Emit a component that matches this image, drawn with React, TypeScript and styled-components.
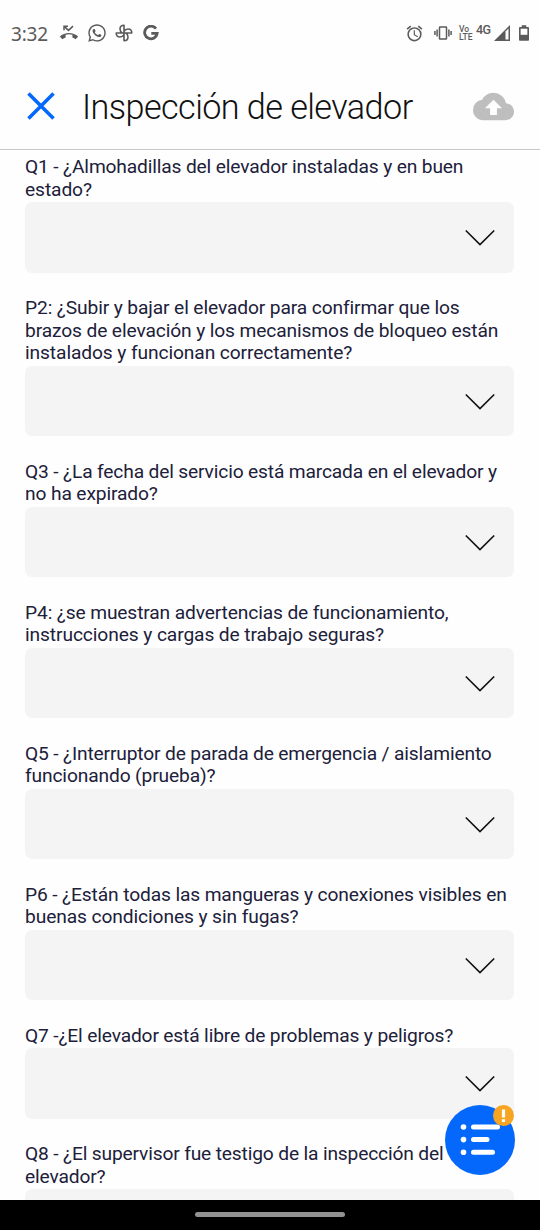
import React from "react";
import styled, { createGlobalStyle } from "styled-components";
import { FaWhatsapp } from "react-icons/fa";
import { MdAlarm, MdCloudUpload } from "react-icons/md";

const GlobalStyle = createGlobalStyle`
  * { box-sizing: border-box; }
  html, body { margin: 0; padding: 0; background: #fff; }
  body { font-family: Roboto, "Liberation Sans", sans-serif; }
`;

const Screen = styled.div`
  position: relative;
  display: flex;
  flex-direction: column;
  width: 540px;
  height: 1230px;
  overflow: hidden;
  background: #fefefe;
`;

const StatusBar = styled.div`
  display: flex;
  align-items: center;
  justify-content: space-between;
  height: 66px;
  padding: 0 11px 0 11px;
  color: #5b5b5b;
`;

const StatusGroup = styled.div<{ $gap: number }>`
  display: flex;
  align-items: center;
  gap: ${(p) => p.$gap}px;
  svg { display: block; flex: none; }
`;

const Time = styled.span`
  width: 40px;
  padding-top: 2px;
  font: 400 19px/24px "Noto Sans", sans-serif;
  letter-spacing: -0.2px;
  white-space: nowrap;
`;

const Volte = styled.span`
  display: flex;
  flex-direction: column;
  width: 14px;
  font-size: 8.5px;
  font-weight: 500;
  line-height: 8px;
`;

const Network = styled.span`
  width: 15px;
  height: 23px;
  margin: 0 3px;
  font-size: 12.5px;
  font-weight: 500;
  line-height: 15px;
  letter-spacing: -0.5px;
`;

const Header = styled.header`
  display: flex;
  align-items: center;
  flex: none;
  height: 84px;
  padding: 0 26px 3px;
  border-bottom: 1.5px solid #c9c9c9;
  svg { display: block; flex: none; }
`;

const Title = styled.h1`
  flex: 1;
  margin: 2px 0 0 26px;
  font-size: 34.2px;
  font-weight: 300;
  line-height: 42px;
  letter-spacing: -0.57px;
  color: #111;
  white-space: nowrap;
`;

const Form = styled.main`
  display: flex;
  flex-direction: column;
  gap: 24.5px;
  flex: 1;
  min-height: 0;
  padding: 6px 26px 0 25px;
  overflow: hidden;
`;

const Field = styled.section`
  flex: none;
`;

const Question = styled.div`
  padding-bottom: 1px;
  font-size: 19.2px;
  line-height: 22.5px;
  color: #20203a;
`;

const Line = styled.span<{ $spacing: number }>`
  display: block;
  letter-spacing: ${(p) => p.$spacing}px;
  white-space: nowrap;
`;

const Select = styled.button`
  display: flex;
  align-items: center;
  justify-content: flex-end;
  width: 100%;
  height: 70.5px;
  padding: 2px 19px 0 0;
  border: 0;
  border-radius: 7px;
  background: #f4f4f4;
`;

const Fab = styled.button`
  position: absolute;
  left: 445px;
  top: 1105px;
  width: 70px;
  height: 70px;
  padding: 0;
  border: 0;
  border-radius: 50%;
  background: #0468fd;
  svg { display: block; }
`;

const Badge = styled.span`
  position: absolute;
  top: 0;
  right: 1px;
  width: 21px;
  height: 21px;
  border-radius: 50%;
  background: #f8a423;
`;

const NavBar = styled.footer`
  display: flex;
  justify-content: center;
  flex: none;
  height: 30px;
  padding-top: 12px;
  background: #000;
`;

const NavHandle = styled.div`
  width: 150px;
  height: 5px;
  border-radius: 3px;
  background: #929292;
`;

const AlarmIcon = styled(MdAlarm)`
  margin-right: 10px;
`;

const VibrateSvg = styled.svg`
  margin-right: 7px;
`;

const BatterySvg = styled.svg`
  margin-left: 9px;
`;

const GSvg = styled.svg`
  margin-left: 2px;
`;

const MissedCallIcon = () => (
  <svg width="20" height="16" viewBox="0 0 20 16" fill="none">
    <path d="M.8 11.6C5.6 6.9 14.4 6.9 19.2 11.6l-2.6 2.6c-1.2-.9-2-1.4-3.2-1.8v-2.7c-2.2-.7-4.6-.7-6.8 0v2.7c-1.2.4-2 .9-3.2 1.8z" fill="currentColor" />
    <path d="M5 5.2V1.2h4M5.2 1.4l4.300 4L14 1.1" stroke="currentColor" strokeWidth="1.5" />
  </svg>
);

const PinwheelIcon = () => (
  <svg width="18" height="18" viewBox="0 0 18 18" fill="none" stroke="currentColor" strokeWidth="1.6" strokeLinejoin="round">
    <path d="M9 9V1.2C6.5 1.2 5 3 5 5c0 1.8 1 3.3 2.3 4M9 9h7.8c0-2.5-1.8-4-3.8-4-1.8 0-3.3 1-4 2.3M9 9v7.8c2.5 0 4-1.8 4-3.8 0-1.8-1-3.3-2.3-4M9 9H1.2c0 2.5 1.8 4 3.8 4 1.8 0 3.3-1 4-2.3" />
  </svg>
);

const GIcon = () => (
  <GSvg width="16" height="16" viewBox="0 0 16 16" fill="none" stroke="currentColor" strokeWidth="2.8">
    <path d="M13 3.7A6.3 6.3 0 1 0 14.2 8.300H8.3" />
  </GSvg>
);

const VibrateIcon = () => (
  <VibrateSvg width="18" height="14" viewBox="0 0 18 14" fill="none" stroke="currentColor" strokeWidth="1.5">
    <rect x="5.5" y="1" width="7" height="12" rx=".5" />
    <path d="M3.1 3.5v7M.9 5v4M14.9 3.5v7M17.1 5v4" />
  </VibrateSvg>
);

const SignalIcon = () => (
  <svg width="16" height="16" viewBox="0 0 16 16">
    <path d="M0 16 16 0v16z" fill="currentColor" />
    <path d="M11.5 6.5 14.5 3.5v11h-3z" fill="#fefefe" />
  </svg>
);

const BatteryIcon = () => (
  <BatterySvg width="10" height="16" viewBox="0 0 11 17">
    <path d="M3 0h5v2h2a1 1 0 0 1 1 1v13a1 1 0 0 1-1 1H1a1 1 0 0 1-1-1V3a1 1 0 0 1 1-1h2z" fill="currentColor" />
    <path d="M1.8 3.8h7.400v6.700H1.800z" fill="#fefefe" />
  </BatterySvg>
);

const CloseIcon = () => (
  <svg width="30" height="28" viewBox="0 0 30 28" stroke="#0468fd" strokeWidth="3.6">
    <path d="M2.5 1.5 27.5 26.5M27.5 1.5 2.5 26.5" />
  </svg>
);

const Chevron = () => (
  <svg width="30" height="18" viewBox="0 0 30 18" fill="none" stroke="#111" strokeWidth="1.6">
    <path d="M.8 1.5 15 15.6 29.2 1.5" />
  </svg>
);

const ListIcon = () => (
  <svg width="70" height="70" viewBox="0 0 70 70" stroke="#fff" strokeLinecap="round" fill="#fff">
    <path d="M28.5 22h24M28.5 34.6h13.5M28.5 47.3h19" strokeWidth="5" />
    <g stroke="none">
      <circle cx="18.5" cy="22" r="2.8" />
      <circle cx="18.5" cy="34.6" r="2.8" />
      <circle cx="18.5" cy="47.3" r="2.8" />
    </g>
  </svg>
);

const AlertMark = () => (
  <svg width="21" height="21" viewBox="0 0 21 21" fill="#fff">
    <path d="M8.9 4.5h3.2v8H8.9zM8.9 14.2h3.2v2.900H8.900z" />
  </svg>
);

type QuestionLine = { text: string; spacing: number };

const questions: QuestionLine[][] = [
  [
    { text: "Q1 - ¿Almohadillas del elevador instaladas y en buen", spacing: -0.15 },
    { text: "estado?", spacing: -0.1 },
  ],
  [
    { text: "P2: ¿Subir y bajar el elevador para confirmar que los", spacing: -0.12 },
    { text: "brazos de elevación y los mecanismos de bloqueo están", spacing: -0.12 },
    { text: "instalados y funcionan correctamente?", spacing: -0.1 },
  ],
  [
    { text: "Q3 - ¿La fecha del servicio está marcada en el elevador y", spacing: -0.155 },
    { text: "no ha expirado?", spacing: -0.12 },
  ],
  [
    { text: "P4: ¿se muestran advertencias de funcionamiento,", spacing: -0.13 },
    { text: "instrucciones y cargas de trabajo seguras?", spacing: -0.1 },
  ],
  [
    { text: "Q5 - ¿Interruptor de parada de emergencia / aislamiento", spacing: -0.155 },
    { text: "funcionando (prueba)?", spacing: -0.13 },
  ],
  [
    { text: "P6 - ¿Están todas las mangueras y conexiones visibles en", spacing: -0.125 },
    { text: "buenas condiciones y sin fugas?", spacing: -0.1 },
  ],
  [{ text: "Q7 -¿El elevador está libre de problemas y peligros?", spacing: -0.155 }],
  [
    { text: "Q8 - ¿El supervisor fue testigo de la inspección del", spacing: -0.16 },
    { text: "elevador?", spacing: -0.15 },
  ],
];

export default function App() {
  return (
    <>
      <GlobalStyle />
      <Screen>
        <StatusBar>
          <StatusGroup $gap={8}>
            <Time>3:32</Time>
            <MissedCallIcon />
            <FaWhatsapp size={20} />
            <PinwheelIcon />
            <GIcon />
          </StatusGroup>
          <StatusGroup $gap={0}>
            <AlarmIcon size={19} />
            <VibrateIcon />
            <Volte>
              <span>Vo</span>
              <span>LTE</span>
            </Volte>
            <Network>4G</Network>
            <SignalIcon />
            <BatteryIcon />
          </StatusGroup>
        </StatusBar>
        <Header>
          <CloseIcon />
          <Title>Inspección de elevador</Title>
          <MdCloudUpload size={41} color="#bebebe" />
        </Header>
        <Form>
          {questions.map((lines) => (
            <Field key={lines[0].text}>
              <Question>
                {lines.map((line) => (
                  <Line key={line.text} $spacing={line.spacing}>
                    {line.text}
                  </Line>
                ))}
              </Question>
              <Select aria-label={lines.map((line) => line.text).join(" ")}>
                <Chevron />
              </Select>
            </Field>
          ))}
        </Form>
        <NavBar>
          <NavHandle />
        </NavBar>
        <Fab aria-label="Lista">
          <ListIcon />
          <Badge>
            <AlertMark />
          </Badge>
        </Fab>
      </Screen>
    </>
  );
}
